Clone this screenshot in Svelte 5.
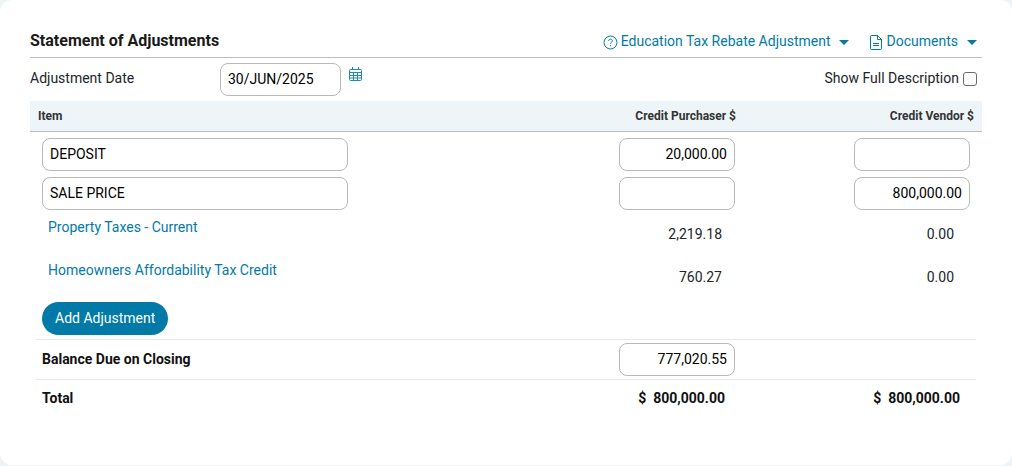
<script>
	const items = [
		{ name: 'DEPOSIT', purchaser: '20,000.00', vendor: '' },
		{ name: 'SALE PRICE', purchaser: '', vendor: '800,000.00' }
	];
	const links = [
		{ name: 'Property Taxes - Current', purchaser: '2,219.18', vendor: '0.00' },
		{ name: 'Homeowners Affordability Tax Credit', purchaser: '760.27', vendor: '0.00' }
	];
</script>

<main class="card">
	<header class="title-row">
		<h2>Statement of Adjustments</h2>
		<nav class="actions">
			<a href="#rebate" class="action rebate">
				<svg width="15" height="15" viewBox="0 0 15 15" fill="none" stroke="#027aa8">
					<circle cx="7.5" cy="7.5" r="6.5" />
					<path d="M5.6 6c0-1.100.8-1.800 1.900-1.800s1.900.7 1.900 1.700c0 1.300-1.900 1.400-1.900 2.800" />
					<path d="M7.500 10.200v1.100" />
				</svg>
				Education Tax Rebate Adjustment
				<i class="caret"></i>
			</a>
			<a href="#documents" class="action docs">
				<svg width="12" height="15" viewBox="0 0 12 15" fill="none" stroke="#027aa8">
					<path d="M1.500.5h6l4 4v9a1 1 0 0 1-1 1h-9a1 1 0 0 1-1-1v-12a1 1 0 0 1 1-1z" />
					<path d="M7.500.5v4h4M3 8.500h6M3 10.500h6" />
				</svg>
				Documents
				<i class="caret"></i>
			</a>
		</nav>
	</header>

	<div class="date-row">
		<span class="date-label">Adjustment Date</span>
		<input class="field date" value="30/JUN/2025" />
		<svg class="calendar" width="13" height="14" viewBox="0 0 13 14" fill="none" stroke="#1b8bb5">
			<rect x="0.500" y="2.500" width="12" height="11" rx="1" />
			<path d="M.5 5.500h12M.5 8.500h12M.5 11h12M4.500 5.500v8M8.500 5.500v8" />
			<path d="M3.500 0v3M9.500 0v3" />
		</svg>
		<label class="full-desc">
			Show Full Description
			<input type="checkbox" />
		</label>
	</div>

	<div class="table-head">
		<span>Item</span>
		<span class="num">Credit Purchaser $</span>
		<span class="num">Credit Vendor $</span>
	</div>

	<div class="rows">
		{#each items as item}
			<div class="row input-row">
				<input class="field name" value={item.name} />
				<input class="field amount" value={item.purchaser} />
				<input class="field amount" value={item.vendor} />
			</div>
		{/each}

		{#each links as link}
			<div class="row link-row">
				<a href="#adjustment">{link.name}</a>
				<span class="fig">{link.purchaser}</span>
				<span class="fig">{link.vendor}</span>
			</div>
		{/each}
	</div>

	<button class="add">Add Adjustment</button>

	<div class="row balance">
		<strong>Balance Due on Closing</strong>
		<input class="field amount" value="777,020.55" />
	</div>

	<div class="row total">
		<strong>Total</strong>
		<strong class="sum"><span>$</span> 800,000.00</strong>
		<strong class="sum"><span>$</span> 800,000.00</strong>
	</div>
</main>

<style>
	:global(body) {
		background: #eef3f6;
	}
	.card {
		box-sizing: border-box;
		width: 1012px;
		height: 465px;
		padding: 25px 30px 0;
		background: #fff;
		border-radius: 12px;
		font-family: Roboto, sans-serif;
		font-size: 14px;
		color: #212529;
	}
	.title-row {
		display: flex;
		justify-content: space-between;
		align-items: flex-end;
		height: 33px;
		box-sizing: border-box;
		padding-bottom: 6px;
		border-bottom: 1px solid #bdbdbd;
	}
	h2 {
		margin: 0;
		font-size: 16px;
		font-weight: 700;
		line-height: 20px;
		color: #1a1a1a;
	}
	.actions {
		display: flex;
		gap: 21px;
		padding-right: 5px;
	}
	.action {
		display: flex;
		align-items: center;
		gap: 4px;
		color: #027aa8;
		text-decoration: none;
		line-height: 20px;
	}
	.action svg {
		margin-top: 2px;
	}
	.rebate svg {
		margin-right: -1px;
	}
	.docs svg {
		margin-right: 1px;
	}
	.caret {
		width: 0;
		height: 0;
		margin-left: 4px;
		margin-top: 3px;
		border: 5px solid transparent;
		border-top-color: #027aa8;
		border-bottom: 0;
	}
	.docs .caret {
		margin-left: 5px;
	}
	.date-row {
		display: flex;
		align-items: flex-start;
		height: 43px;
		padding-top: 5px;
		box-sizing: border-box;
	}
	.date-label {
		width: 190px;
		line-height: 30px;
		color: #212529;
	}
	.field {
		box-sizing: border-box;
		height: 33px;
		padding: 0 7px 2px;
		border: 1px solid #b9b9b9;
		border-radius: 8px;
		background: #fff;
		font: 14px Roboto, sans-serif;
		color: #000;
		outline: none;
	}
	.date {
		width: 121px;
	}
	.calendar {
		margin: 4px 0 0 8px;
	}
	.full-desc {
		display: flex;
		align-items: center;
		gap: 4px;
		margin-left: auto;
		height: 30px;
		padding-right: 5px;
	}
	.full-desc input {
		appearance: none;
		width: 14px;
		height: 14px;
		margin: 2px 0 0;
		border: 1px solid #6b6b6b;
		border-radius: 3px;
		background: #fff;
	}
	.table-head {
		display: grid;
		grid-template-columns: 1fr 240px 238px;
		align-items: center;
		height: 31px;
		box-sizing: border-box;
		padding: 0 8px;
		background: #eef5f9;
		border-bottom: 1px solid #bdbdbd;
		font-size: 12px;
		font-weight: 700;
		color: #333;
	}
	.num {
		text-align: right;
	}
	.rows {
		padding-top: 6px;
	}
	.row {
		display: grid;
		grid-template-columns: 1fr 116px 235px;
		margin: 0 6px;
		padding: 0 6px;
		align-items: center;
	}
	.input-row {
		margin-bottom: 6px;
	}
	.name {
		width: 306px;
	}
	.amount {
		width: 116px;
		text-align: right;
	}
	.input-row .amount:last-child {
		margin-left: 119px;
	}
	.link-row {
		align-items: start;
		height: 43px;
	}
	.link-row a {
		padding: 1px 0 0 6px;
		line-height: 20px;
		color: #027aa8;
		text-decoration: none;
	}
	.fig {
		padding: 8px 13px 0 0;
		line-height: 20px;
		text-align: right;
	}
	.fig:last-child {
		padding-right: 16px;
	}
	.add {
		display: block;
		height: 33px;
		margin: 0 0 4px 12px;
		padding: 0 13px 2px;
		border: 0;
		border-radius: 17px;
		background: #027aa8;
		color: #fff;
		font: 14px Roboto, sans-serif;
	}
	.balance {
		box-sizing: border-box;
		height: 41px;
		border-top: 1px solid #e8e8e8;
		border-bottom: 1px solid #e8e8e8;
	}
	.balance strong {
		padding-bottom: 2px;
	}
	.row strong {
		color: #111;
		font-size: 14px;
	}
	.total {
		height: 35px;
	}
	.sum {
		display: flex;
		justify-content: flex-end;
		gap: 7px;
		white-space: nowrap;
		padding-right: 10px;
	}
</style>
